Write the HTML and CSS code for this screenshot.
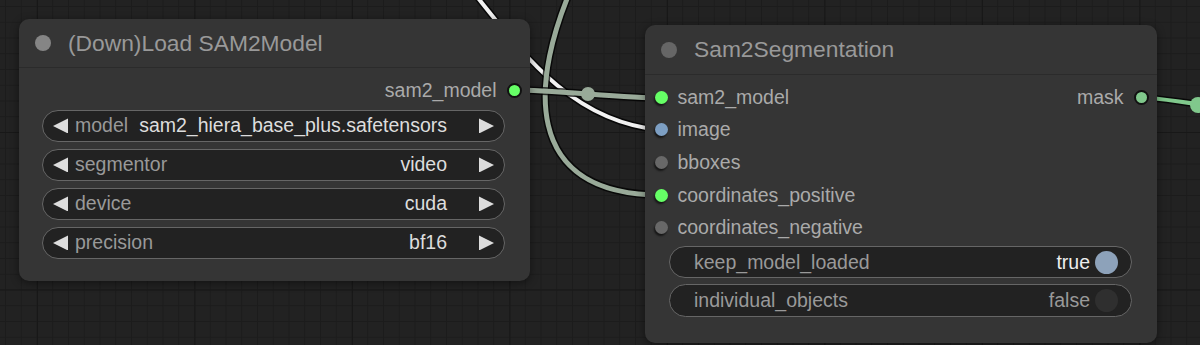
FILE: index.html
```html
<!DOCTYPE html>
<html>
<head>
  <title>Sam2 nodes</title>
  <link rel="stylesheet" href="styles.css">
</head>
<body>
  <div class="canvas">
    <!-- links are drawn below the nodes -->
    <svg class="wires" width="1200" height="345" viewBox="0 0 1200 345">
      <g fill="none" stroke-linecap="round">
        <path class="wire-edge" d="M 470 -12 C 520 50, 570 122, 661 130" stroke-width="7"/>
        <path d="M 470 -12 C 520 50, 570 122, 661 130" stroke="#f2f2f2" stroke-width="4"/>

        <path class="wire-edge" d="M 575 -20 C 530 80, 520 195, 661 195" stroke-width="8"/>
        <path d="M 575 -20 C 530 80, 520 195, 661 195" stroke="#99aa99" stroke-width="5"/>

        <path class="wire-edge" d="M 515 90 C 551 90, 625 98, 661 98" stroke-width="8"/>
        <path d="M 515 90 C 551 90, 625 98, 661 98" stroke="#99aa99" stroke-width="5"/>

        <path class="wire-edge" d="M 1141 98 C 1170 98, 1180 104, 1230 107" stroke-width="7"/>
        <path d="M 1141 98 C 1170 98, 1180 104, 1230 107" stroke="#80c88c" stroke-width="4"/>
      </g>
      <circle cx="588" cy="94" r="7" fill="#99aa99"/>
      <circle cx="1198" cy="105" r="8" fill="#80c88c"/>
    </svg>

    <div class="node node-loader">
      <div class="node-title">
        <span class="title-dot light"></span>
        <span>(Down)Load SAM2Model</span>
      </div>
      <div class="slots">
        <div class="slot-row">
          <div class="slot slot-out">
            <span>sam2_model</span>
            <span class="dot out green"></span>
          </div>
        </div>
      </div>
      <div class="widgets">
        <div class="combo">
          <span class="arrow left"></span>
          <span class="combo-label">model</span>
          <span class="combo-value">sam2_hiera_base_plus.safetensors</span>
          <span class="arrow right"></span>
        </div>
        <div class="combo">
          <span class="arrow left"></span>
          <span class="combo-label">segmentor</span>
          <span class="combo-value">video</span>
          <span class="arrow right"></span>
        </div>
        <div class="combo">
          <span class="arrow left"></span>
          <span class="combo-label">device</span>
          <span class="combo-value">cuda</span>
          <span class="arrow right"></span>
        </div>
        <div class="combo">
          <span class="arrow left"></span>
          <span class="combo-label">precision</span>
          <span class="combo-value">bf16</span>
          <span class="arrow right"></span>
        </div>
      </div>
    </div>

    <div class="node node-seg">
      <div class="node-title tall">
        <span class="title-dot"></span>
        <span>Sam2Segmentation</span>
      </div>
      <div class="slots">
        <div class="slot-row">
          <div class="slot slot-in">
            <span class="dot in green"></span>
            <span>sam2_model</span>
          </div>
          <div class="slot slot-out">
            <span>mask</span>
            <span class="dot out mask"></span>
          </div>
        </div>
        <div class="slot-row">
          <div class="slot slot-in">
            <span class="dot in blue"></span>
            <span>image</span>
          </div>
        </div>
        <div class="slot-row">
          <div class="slot slot-in">
            <span class="dot in empty"></span>
            <span>bboxes</span>
          </div>
        </div>
        <div class="slot-row">
          <div class="slot slot-in">
            <span class="dot in green"></span>
            <span>coordinates_positive</span>
          </div>
        </div>
        <div class="slot-row">
          <div class="slot slot-in">
            <span class="dot in empty"></span>
            <span>coordinates_negative</span>
          </div>
        </div>
      </div>
      <div class="widgets toggles">
        <div class="toggle">
          <span class="combo-label">keep_model_loaded</span>
          <span class="toggle-value on">true</span>
          <span class="knob on"></span>
        </div>
        <div class="toggle">
          <span class="combo-label">individual_objects</span>
          <span class="toggle-value">false</span>
          <span class="knob"></span>
        </div>
      </div>
    </div>
  </div>
</body>
</html>
```

FILE: styles.css
```css
body {
  margin: 0;
  background: #202020;
  font-family: "Liberation Sans", Arial, sans-serif;
}

.canvas {
  position: relative;
  width: 1200px;
  height: 345px;
  overflow: hidden;
  background-color: #222;
  background-image:
    linear-gradient(to right, #181818 1px, transparent 1px),
    linear-gradient(to bottom, #181818 1px, transparent 1px),
    linear-gradient(to right, #1c1c1c 1px, transparent 1px),
    linear-gradient(to bottom, #1c1c1c 1px, transparent 1px);
  background-size: 157.5px 157.5px, 157.5px 157.5px, 15.75px 15.75px, 15.75px 15.75px;
  background-position: 37px 132px, 37px 132px, 5px 6px, 5px 6px;
}

.wires {
  position: absolute;
  left: 0;
  top: 0;
}

.wire-edge {
  stroke: rgba(0, 0, 0, 0.75);
}

.node {
  position: absolute;
  box-sizing: border-box;
  background: #353535;
  border-radius: 10px;
  box-shadow: 0 2px 8px rgba(0, 0, 0, 0.45);
}

.node-loader {
  left: 19px;
  top: 19px;
  width: 511px;
  height: 262px;
}

.node-seg {
  left: 645px;
  top: 25px;
  width: 512px;
  height: 318px;
}

.node-title {
  display: flex;
  align-items: center;
  gap: 17px;
  box-sizing: border-box;
  height: 49px;
  padding-left: 16px;
  font-size: 22.8px;
  color: #999;
  border-bottom: 1px solid #2b2b2b;
}

.node-title.tall {
  height: 50px;
}

.title-dot {
  width: 16px;
  height: 16px;
  border-radius: 50%;
  background: #666;
}

.title-dot.light {
  background: #858585;
}

.slots {
  padding-top: 6px;
}

.slot-row {
  display: flex;
  align-items: center;
  height: 32.6px;
  font-size: 19.5px;
  color: #aaa;
}

.slot {
  display: flex;
  align-items: center;
  gap: 10px;
}

.slot-in {
  padding-left: 9.5px;
}

.slot-out {
  margin-left: auto;
  padding-right: 8.5px;
}

.dot {
  box-sizing: border-box;
  width: 13px;
  height: 13px;
  border-radius: 50%;
}

.dot.in {
  box-shadow: -1px 2px 2px rgba(0, 0, 0, 0.6);
}

.dot.out {
  width: 15px;
  height: 15px;
  border: 2px solid #111;
}

.dot.green {
  background: #66ff66;
}

.dot.blue {
  background: #7d9fc3;
}

.dot.empty {
  background: #686868;
}

.dot.mask {
  background: #80c88c;
}

.widgets {
  display: flex;
  flex-direction: column;
  gap: 7px;
  margin: 3.4px 25px 0 23px;
}

.widgets.toggles {
  gap: 6px;
  margin: 2px 25px 0 24px;
}

.combo,
.toggle {
  display: flex;
  align-items: center;
  box-sizing: border-box;
  height: 32px;
  background: #222;
  border: 1.5px solid #666;
  border-radius: 17px;
  font-size: 19.5px;
}

.combo {
  padding: 0 10px 0 10px;
}

.toggle {
  height: 32.5px;
  padding: 0 13px 0 24px;
}

.arrow {
  width: 15px;
  height: 15px;
  background: #ddd;
}

.arrow.left {
  clip-path: polygon(100% 0, 100% 100%, 0 50%);
}

.arrow.right {
  clip-path: polygon(0 0, 100% 50%, 0 100%);
}

.combo-label {
  color: #999;
  margin-left: 7px;
}

.toggle .combo-label {
  margin-left: 0;
}

.combo-value {
  color: #ddd;
  margin-left: auto;
  margin-right: 32px;
}

.toggle-value {
  color: #999;
  margin-left: auto;
  margin-right: 5px;
}

.toggle-value.on {
  color: #eee;
}

.knob {
  width: 23px;
  height: 23px;
  border-radius: 50%;
  background: #2f2f2f;
}

.knob.on {
  background: #8da2ba;
}
```
